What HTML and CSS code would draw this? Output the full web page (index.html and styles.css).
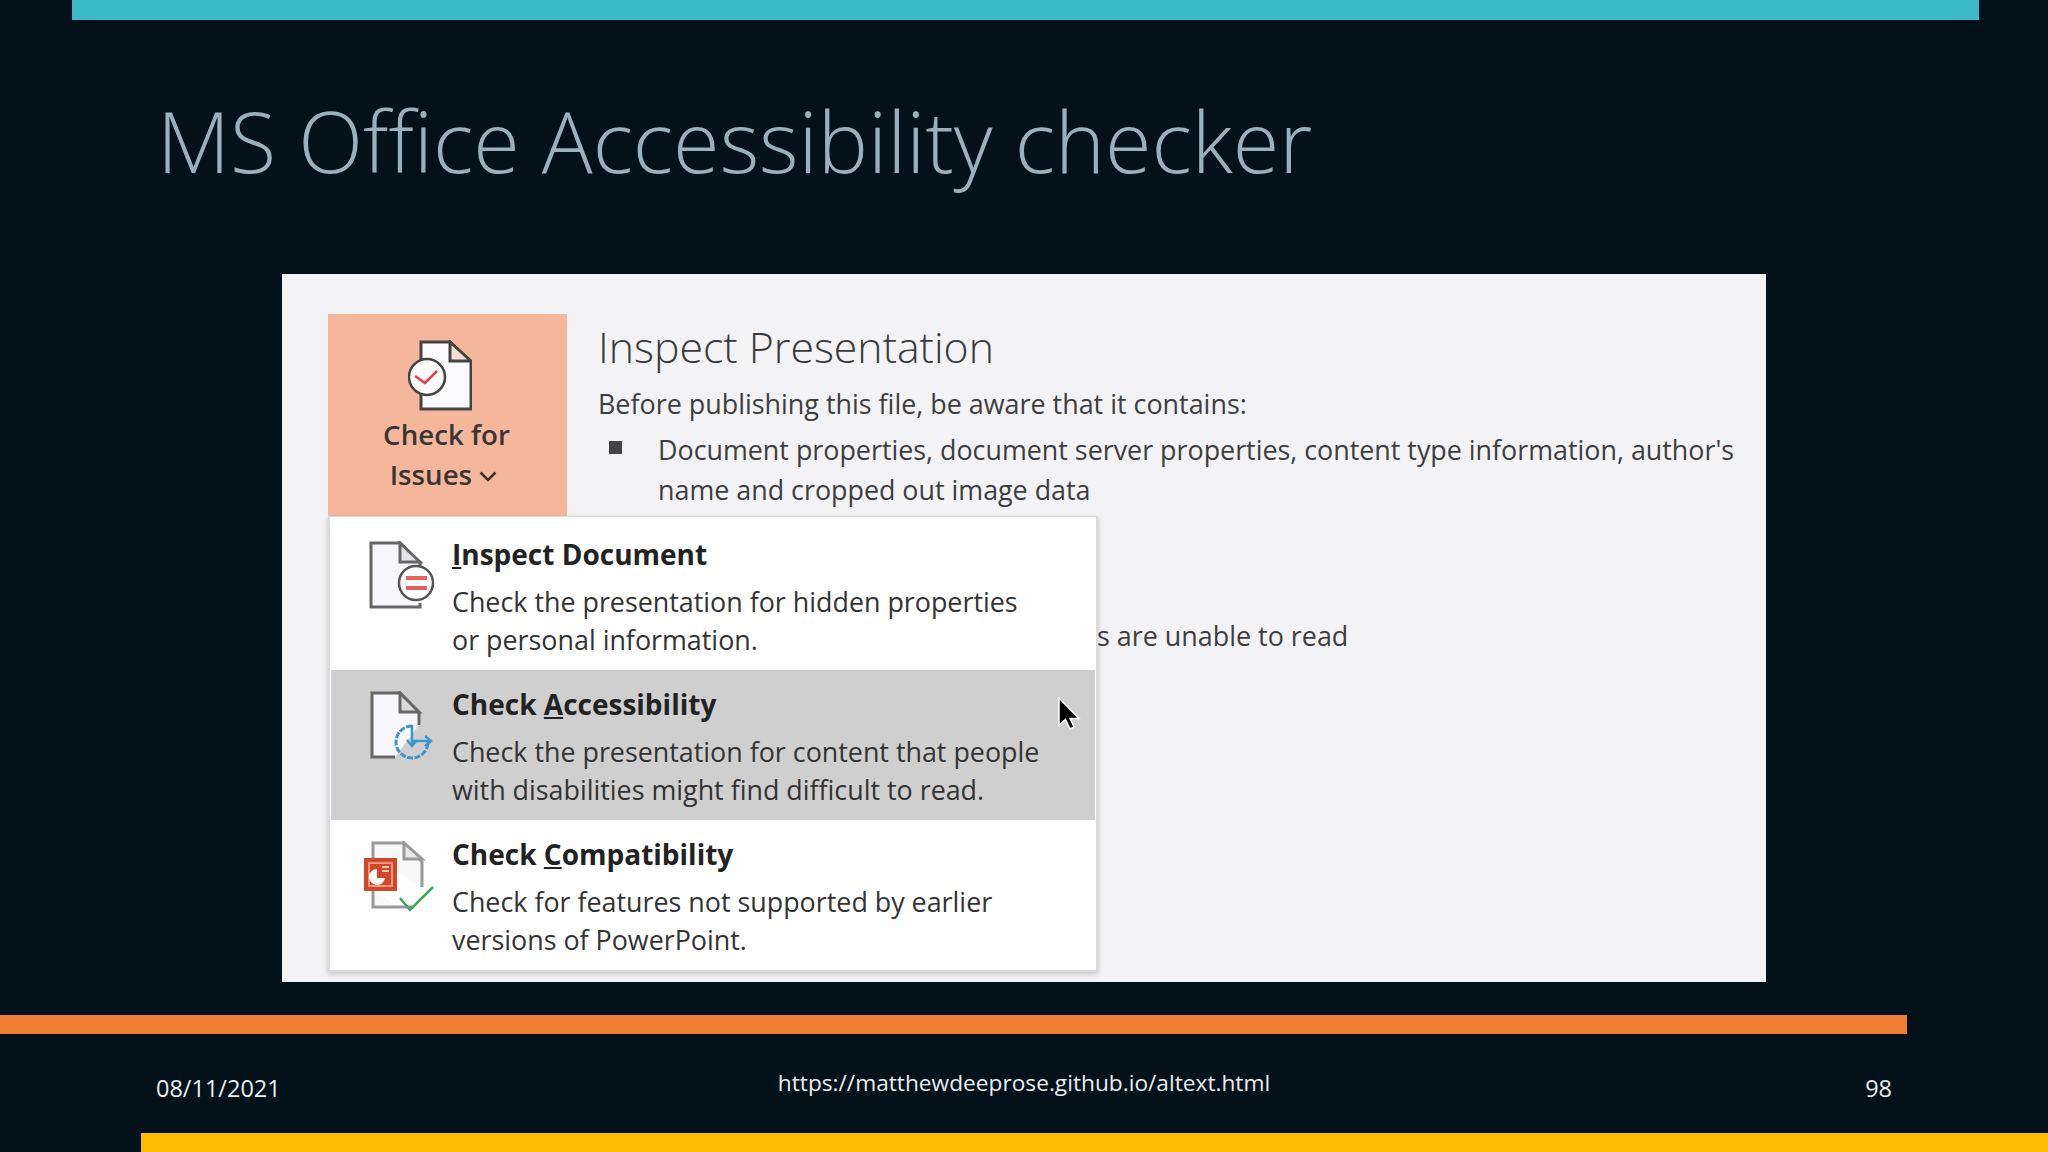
FILE: index.html
```html
<!DOCTYPE html>
<html lang="en">
<head>
<meta charset="utf-8">
<title>MS Office Accessibility checker</title>
<link rel="stylesheet" href="styles.css">
</head>
<body>
<div class="slide">
  <div class="bar-top"></div>
  <h1 class="title">MS Office Accessibility checker</h1>
  <div class="shot">
    <div class="btn">
      <svg class="btn-icon" viewBox="0 0 64 72">
        <path d="M13 2H42L63 22V69H13Z" fill="#fbfbfd" stroke="#444" stroke-width="3"/>
        <path d="M42 2V21H63Z" fill="#f3ded4" stroke="#444" stroke-width="3"/>
        <circle cx="19" cy="37" r="18" fill="#fdfdfd" stroke="#444" stroke-width="2.500"/>
        <path d="M7 36L17 43L29 31" fill="none" stroke="#e0404a" stroke-width="2.500"/>
      </svg>
      <div class="btn-label">Check for<br>Issues <svg class="chev" viewBox="0 0 12 8"><path d="M1 1L6 6L11 1" fill="none" stroke="#333" stroke-width="1.700"/></svg></div>
    </div>
    <div class="info">
      <h2 class="info-title">Inspect Presentation</h2>
      <p class="info-lead">Before publishing this file, be aware that it contains:</p>
      <div class="bullet"><span class="square"></span><p class="bullet-text">Document properties, document server properties, content type information, author's name and cropped out image data</p></div>
      <p class="info-tail">s are unable to read</p>
    </div>
    <div class="menu">
      <div class="item item-first">
        <svg class="item-icon" viewBox="0 0 74 72">
          <path d="M58 28V22L38 2H9V66H58V62" fill="#f8f8fc" stroke="#666" stroke-width="3"/>
          <path d="M38 2V21H58Z" fill="#e4e4e8" stroke="#666" stroke-width="3"/>
          <circle cx="54" cy="42" r="17" fill="#fff" stroke="#555" stroke-width="2.500"/>
          <path d="M44 37H65M44 47H65" stroke="#e8605c" stroke-width="4"/>
        </svg>
        <div class="item-body">
          <div class="item-head"><u>I</u>nspect Document</div>
          <div class="item-desc">Check the presentation for hidden properties<br>or personal information.</div>
        </div>
      </div>
      <div class="item item-active">
        <svg class="item-icon" viewBox="0 0 74 72">
          <path d="M57 34V22L38 2H10V66H33" fill="#f8f8fc" stroke="#666" stroke-width="3"/>
          <path d="M38 2V21H57Z" fill="#dcdbdc" stroke="#666" stroke-width="3"/>
          <path d="M50 35A16 16 0 1 0 66 51" fill="none" stroke="#3d97cf" stroke-width="3" stroke-dasharray="6 1.500"/>
          <path d="M50 34V54M45 49L50 55L55 49M50 50H69M63 45L69 50L63 55" fill="none" stroke="#3d97cf" stroke-width="2.500"/>
        </svg>
        <div class="item-body">
          <div class="item-head">Check <u>A</u>ccessibility</div>
          <div class="item-desc">Check the presentation for content that people<br>with disabilities might find difficult to read.</div>
        </div>
        <svg class="cursor" viewBox="0 0 24 34"><path d="M2 1V28L8.500 22.500L13 32L17 30L13 21.500H22Z" fill="#000" stroke="#fff" stroke-width="1.500"/></svg>
      </div>
      <div class="item">
        <svg class="item-icon" viewBox="0 0 74 72">
          <path d="M11 17V2H42L60 21V46M38 66H11V50" fill="#f8f8f8" stroke="#999" stroke-width="3"/>
          <path d="M38 66H52" fill="none" stroke="#999" stroke-width="3"/>
          <path d="M42 2V18H60Z" fill="#e9e9e9" stroke="#999" stroke-width="3"/>
          <rect x="2" y="17" width="33" height="33" fill="#d24726"/>
          <rect x="6" y="21" width="25" height="25" fill="#eb9a80"/>
          <rect x="8" y="23" width="21" height="21" fill="#d24726"/>
          <path d="M15 28A8 8 0 1 0 23 37H15Z" fill="#fff"/>
          <path d="M20 26H27M20 30H27" stroke="#f4c6b6" stroke-width="2"/>
          <path d="M38 57L48 69L71 46" fill="none" stroke="#3fa45c" stroke-width="2.500"/>
        </svg>
        <div class="item-body">
          <div class="item-head">Check <u>C</u>ompatibility</div>
          <div class="item-desc">Check for features not supported by earlier<br>versions of PowerPoint.</div>
        </div>
      </div>
    </div>
  </div>
  <div class="bar-orange"></div>
  <div class="footer">
    <span class="date">08/11/2021</span>
    <span class="url">https://matthewdeeprose.github.io/altext.html</span>
    <span class="num">98</span>
  </div>
  <div class="bar-yellow"></div>
</div>
</body>
</html>
```
FILE: styles.css
```css
* { box-sizing: border-box; }
html, body { margin: 0; padding: 0; }
body { width: 2048px; height: 1152px; overflow: hidden; background: #02111a; font-family: "Open Sans", "Noto Sans", sans-serif; }
.slide { display: flex; flex-direction: column; height: 1152px; }
.bar-top { height: 20px; margin: 0 69px 0 72px; background: #3bb9c6; flex: none; }
.title { margin: 64px 0 0 157px; height: 190px; font-size: 84.700px; line-height: 112px; font-weight: 300; color: #9ab0bd; white-space: nowrap; flex: none; }
.shot { position: relative; flex: none; width: 1484px; height: 708px; margin-left: 282px; background: #f3f2f5; padding: 40px 0 0 46px; display: flex; align-items: flex-start; gap: 31px; color: #3e3e3e; }
.btn { flex: none; width: 239px; height: 203px; background: #f5b79c; display: flex; flex-direction: column; align-items: center; padding-top: 26px; }
.btn-icon { width: 64px; height: 72px; margin-left: -15px; display: block; }
.btn-label { margin: 2px 0 0 -2px; text-align: center; font-size: 27.700px; line-height: 40px; font-weight: 600; color: #3a3532; }
.chev { width: 18px; height: 12px; margin: 0 6px 0 0; vertical-align: 2px; }
.info { flex: 1; min-width: 0; }
.info-title { margin: 0; font-size: 42.800px; line-height: 66px; font-weight: 300; color: #3a3a3a; }
.info-lead { margin: 4px 0 0; font-size: 26.900px; line-height: 40px; }
.bullet { display: flex; margin-top: 6px; gap: 36px; }
.square { flex: none; width: 13px; height: 13px; margin: 11px 0 0 11px; background: #444; }
.bullet-text { margin: 0; font-size: 26.850px; line-height: 40px; }
.info-tail { margin: 106px 0 0 499px; font-size: 26.900px; line-height: 40px; }
.menu { position: absolute; left: 46px; top: 242px; width: 770px; height: 456px; background: #fff; border: 2px solid #dcdcdc; border-top-width: 1px; box-shadow: 0 2px 5px rgba(0,0,0,.2); padding: 0 1px; display: flex; flex-direction: column; }
.item { position: relative; display: flex; height: 150px; flex: none; padding: 21px 0 0 31px; }
.item-first { height: 153px; padding-top: 24px; }
.item-active { background: #d0cfcf; }
.item-icon { width: 74px; height: 72px; flex: none; display: block; }
.item-body { margin: -7px 0 0 16px; color: #333; }
.item-head { font-size: 28px; line-height: 40px; font-weight: 700; color: #222; white-space: nowrap; }
.item-desc { margin-top: 8.500px; font-size: 26.850px; line-height: 38px; white-space: nowrap; }
.cursor { position: absolute; left: 726px; top: 27px; width: 24px; height: 34px; }
.bar-orange { flex: none; height: 19px; width: 1907px; margin-top: 33px; background: #ed7d31; }
.footer { flex: none; height: 99px; position: relative; color: #e8eef2; font-size: 23.500px; display: flex; justify-content: space-between; align-items: flex-start; padding: 38px 156px 0 156px; }
.url { position: absolute; left: 0; right: 0; top: 33px; text-align: center; font-size: 22.700px; }
.bar-yellow { flex: none; height: 19px; margin-left: 141px; background: #ffbb00; }
```
